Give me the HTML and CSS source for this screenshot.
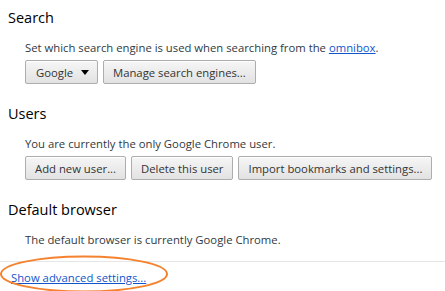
FILE: index.html
```html
<!DOCTYPE html>
<html>
<head>
<meta charset="utf-8">
<link rel="stylesheet" href="styles.css">
</head>
<body>
<div class="page">
  <section class="sec">
    <h3 class="title">Search</h3>
    <div class="body">
      <p class="desc">Set which search engine is used when searching from the <a class="link" href="#">omnibox</a>.</p>
      <div class="row">
        <button class="btn select">Google <span class="arrow"></span></button>
        <button class="btn">Manage search engines...</button>
      </div>
    </div>
  </section>
  <section class="sec">
    <h3 class="title">Users</h3>
    <div class="body">
      <p class="desc">You are currently the only Google Chrome user.</p>
      <div class="row">
        <button class="btn">Add new user...</button>
        <button class="btn">Delete this user</button>
        <button class="btn">Import bookmarks and settings...</button>
      </div>
    </div>
  </section>
  <section class="sec">
    <h3 class="title">Default browser</h3>
    <div class="body">
      <p class="desc">The default browser is currently Google Chrome.</p>
    </div>
  </section>
  <div class="footer">
    <a class="link adv" href="#">Show advanced settings...</a>
    <svg class="ring" width="170" height="38" viewBox="0 0 170 38"><ellipse cx="84" cy="19" rx="83" ry="17.5" fill="none" stroke="#f5822e" stroke-width="2"/></svg>
  </div>
</div>
</body>
</html>
```
FILE: styles.css
```css
html, body { margin: 0; padding: 0; background: #fff; }
body { font-family: "Open Sans", "Noto Sans", sans-serif; font-size: 11.3px; color: #303942; }
.page { width: 445px; height: 291px; overflow: hidden; }
.sec { padding-left: 8px; }
.title { margin: 0; padding-top: 8px; font-size: 14.5px; line-height: 20px; font-weight: normal; color: #000; }
.body { padding-left: 17px; }
.desc { margin: 12px 0 0; line-height: 16px; }
.row { display: flex; gap: 5px; margin-top: 4px; margin-bottom: 12px; }
.btn { font: inherit; color: #333; height: 24px; padding: 0 9px; border: 1px solid #adadad; border-radius: 2px; background: linear-gradient(#f6f6f6, #e2e2e2); box-shadow: inset 0 1px 0 #fff; display: flex; align-items: center; white-space: nowrap; flex-shrink: 0; }
.select { width: 73px; padding: 0 8px 0 10px; justify-content: space-between; }
.arrow { width: 0; height: 0; border-left: 4px solid transparent; border-right: 4px solid transparent; border-top: 5px solid #000; }
.link { color: #15c; text-decoration: underline; }
.footer { position: relative; margin-top: 13px; border-top: 1px solid #e6e6e6; padding: 8px 0 0 11px; }
.adv { display: inline-block; line-height: 14px; }
.ring { position: absolute; left: 0; top: -7px; }
```
